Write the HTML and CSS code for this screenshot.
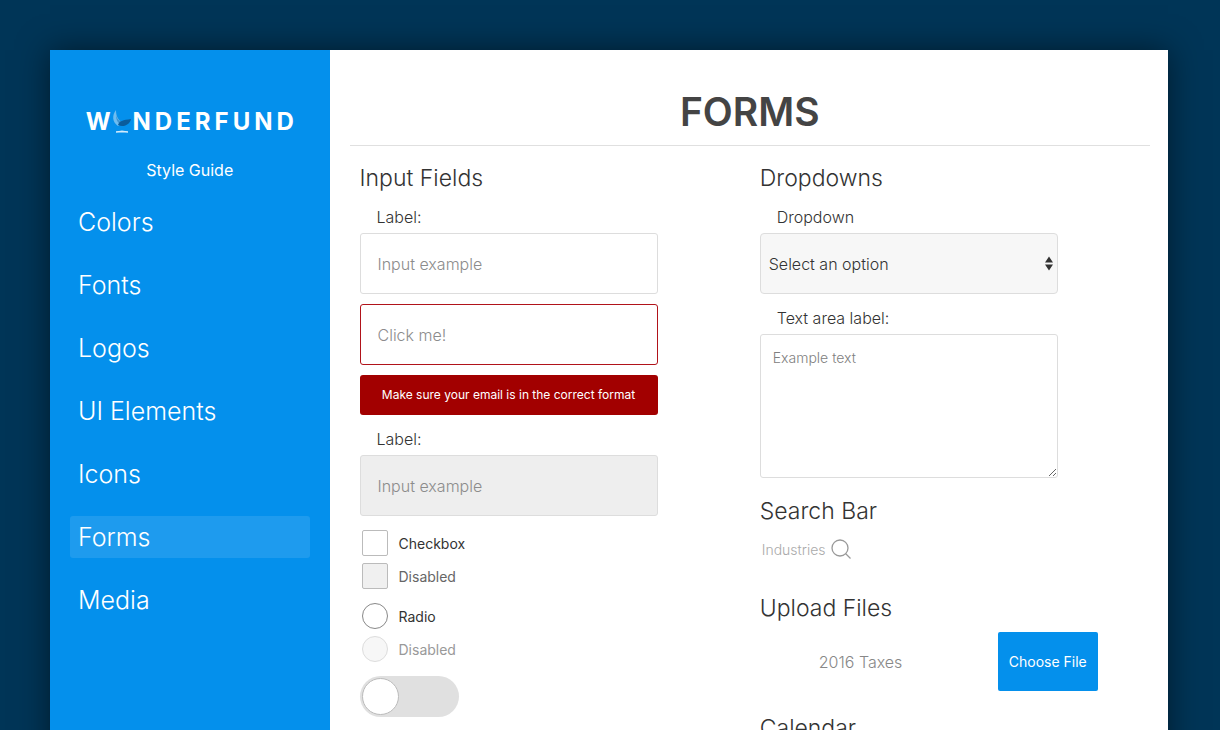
FILE: index.html
```html
<!DOCTYPE html>
<html lang="en">
<head>
<meta charset="utf-8">
<title>Wonderfund Style Guide – Forms</title>
<link rel="stylesheet" href="styles.css">
</head>
<body>
<div class="guide">
  <aside class="sidebar">
    <div class="logo">
      <span>W</span>
      <svg class="logo-mark" viewBox="0 0 20 26" aria-hidden="true">
        <path d="M4 2C0 7 0 14 6 18l5-3C6 12 4 8 4 2z" fill="#6fbdf0"/>
        <path d="M4 7c0 5 2 8 5 10l2-3C7 13 5 11 4 7z" fill="#3f93cf"/>
        <path d="M6 17c1-4 5-5 13-6-1 5-7 9-13 6z" fill="#0a5c9c"/>
        <path d="M4 24q6-2 12 0z" fill="#d5ecfc" stroke="#d5ecfc"/>
      </svg>
      <span class="logo-rest">NDERFUND</span>
    </div>
    <p class="tagline">Style Guide</p>
    <nav class="nav">
      <a href="#colors">Colors</a>
      <a href="#fonts">Fonts</a>
      <a href="#logos">Logos</a>
      <a href="#ui">UI Elements</a>
      <a href="#icons">Icons</a>
      <a href="#forms" class="active" aria-current="page">Forms</a>
      <a href="#media">Media</a>
    </nav>
  </aside>
  <main class="content">
    <h1>FORMS</h1>
    <div class="columns">
      <section class="column">
        <h2>Input Fields</h2>
        <label class="label" for="input1">Label:</label>
        <input class="field" id="input1" type="text" placeholder="Input example">
        <input class="field invalid" type="text" placeholder="Click me!" aria-label="Email" aria-describedby="error">
        <p class="error" id="error">Make sure your email is in the correct format</p>
        <label class="label" for="input2">Label:</label>
        <input class="field" id="input2" type="text" placeholder="Input example" disabled>
        <div class="choices">
          <label class="choice"><input type="checkbox">Checkbox</label>
          <label class="choice off"><input type="checkbox" disabled>Disabled</label>
        </div>
        <div class="choices">
          <label class="choice"><input type="radio" name="r">Radio</label>
          <label class="choice faded"><input type="radio" name="r" disabled>Disabled</label>
        </div>
        <input class="toggle" type="checkbox" role="switch" aria-label="Toggle">
      </section>
      <section class="column">
        <h2>Dropdowns</h2>
        <label class="label" for="dropdown">Dropdown</label>
        <div class="select">
          <select id="dropdown"><option>Select an option</option></select>
          <svg class="arrows" viewBox="0 0 8 14" aria-hidden="true"><path d="M4 0l4 6H0zM4 14L0 8h8z" fill="#333"/></svg>
        </div>
        <label class="label" for="area">Text area label:</label>
        <textarea class="area" id="area" placeholder="Example text"></textarea>
        <h2 class="next">Search Bar</h2>
        <form class="search">
          <input type="text" placeholder="Industries" aria-label="Search">
          <button type="button" aria-label="Search"><svg viewBox="0 0 20 20" fill="none" stroke="#999" stroke-width="1.3" aria-hidden="true"><circle cx="9" cy="9" r="8"/><path d="M14.500 14.500l5 5"/></svg></button>
        </form>
        <h2 class="next upload-title">Upload Files</h2>
        <div class="upload">
          <span class="file-name">2016 Taxes</span>
          <button type="button" class="choose">Choose File</button>
        </div>
        <h2 class="next">Calendar</h2>
      </section>
    </div>
  </main>
</div>
</body>
</html>
```
FILE: styles.css
```css
* { box-sizing: border-box; }

body {
  margin: 0;
  padding: 50px 52px 0 50px;
  background: #003557;
  color: #333;
  font-family: Inter, "Open Sans", sans-serif;
  font-size: 16px;
  font-weight: 300;
}

input, select, textarea, button { font: inherit; color: inherit; margin: 0; }
h1, h2, p { margin: 0; }

.guide {
  display: grid;
  grid-template-columns: 1fr 3fr;
  min-height: calc(100vh - 50px);
  background: #fff;
  box-shadow: 0 0 30px rgba(0, 0, 0, .5);
}

.sidebar {
  padding: 56px 20px 0;
  background: #0490ec;
  color: #fff;
}

.logo {
  display: flex;
  align-items: center;
  justify-content: center;
  height: 30px;
  padding-left: 4px;
  font-size: 24px;
  font-weight: 700;
}
.logo-mark { width: 20px; height: 26px; margin: 0 1px; }
.logo-rest { letter-spacing: 4px; }

.tagline {
  margin-top: 22px;
  line-height: 24px;
  font-weight: 400;
  text-align: center;
}

.nav {
  display: flex;
  flex-direction: column;
  gap: 21px;
  margin-top: 19px;
}
.nav a {
  padding: 0 8px;
  border-radius: 3px;
  color: inherit;
  font-size: 25px;
  line-height: 42px;
  text-decoration: none;
}
.nav .active { background: #1e9bee; }

.content { padding: 35px 18px 0 20px; }

h1 {
  padding-bottom: 6px;
  border-bottom: 1px solid #e0e0e0;
  color: #444;
  font-size: 39px;
  font-weight: 600;
  line-height: 54px;
  text-align: center;
}

.columns { display: grid; grid-template-columns: 1fr 1fr; }
.column { padding: 17px 10px 0; }

h2 { font-size: 23px; font-weight: 300; line-height: 30px; }
h2.next { margin-top: 18px; }

.label {
  display: block;
  margin: 12px 0 4px;
  padding-left: 17px;
  line-height: 24px;
}

.field, .select, .area {
  display: block;
  width: 100%;
  max-width: 298px;
  border: 1px solid #ddd;
  border-radius: 3px;
  background: #fff;
}
.field { height: 61px; padding: 0 17px; }
.field::placeholder { color: #8c8c8c; opacity: 1; }
.field:disabled { background: #eee; }
.invalid { margin-top: 10px; border-color: #b1131a; }

.error {
  max-width: 298px;
  margin-top: 10px;
  border-radius: 3px;
  background: #a20000;
  color: #fff;
  font-size: 12px;
  font-weight: 400;
  line-height: 40px;
  text-align: center;
}

.choices {
  display: grid;
  gap: 7px;
  margin: 14px 0 0 2px;
}
.choice {
  display: flex;
  align-items: center;
  gap: 11px;
  height: 26px;
  font-size: 14px;
  font-weight: 400;
}
.choice input {
  appearance: none;
  width: 26px;
  height: 26px;
  border: 1px solid #bbb;
  border-radius: 2px;
  background: #fff;
}
.choice input[type="radio"] { border-color: #888; border-radius: 50%; }
.choice input:disabled { background: #f0f0f0; }
.choice.off { color: #666; }
.choice.faded { color: #999; }
.choice.faded input { border-color: #ddd; background: #f7f7f7; }

.toggle {
  display: flex;
  align-items: center;
  appearance: none;
  width: 99px;
  height: 41px;
  margin-top: 14px;
  padding: 0 2px;
  border-radius: 21px;
  background: #e0e0e0;
}
.toggle::before {
  content: "";
  width: 35px;
  height: 35px;
  border: 1px solid #bbb;
  border-radius: 50%;
  background: #fff;
}

.select { position: relative; border-radius: 4px; background: #f7f7f7; }
.select select {
  appearance: none;
  display: block;
  width: 100%;
  height: 59px;
  padding: 0 8px;
  border: 0;
  background: transparent;
}
.arrows {
  position: absolute;
  top: 22px;
  right: 4px;
  width: 8px;
  height: 15px;
  pointer-events: none;
}

.area { height: 144px; padding: 14px 12px; font-size: 14px; resize: both; }
.area::placeholder { color: #808080; opacity: 1; }

.search {
  display: flex;
  align-items: center;
  height: 26px;
  margin-top: 10px;
  padding-left: 2px;
}
.search input {
  width: 69px;
  padding: 0;
  border: 0;
  background: transparent;
  font-size: 14px;
}
.search input::placeholder { color: #aaa; opacity: 1; }
.search button { padding: 0; border: 0; background: transparent; }
.search svg { display: block; width: 20px; height: 20px; }

h2.upload-title { margin-top: 31px; }

.upload {
  display: flex;
  align-items: center;
  justify-content: space-between;
  max-width: 338px;
  margin-top: 9px;
  padding-left: 59px;
}
.file-name { color: #888; }
.choose {
  width: 100px;
  height: 59px;
  padding: 0;
  border: 0;
  border-radius: 2px;
  background: #0490ec;
  color: #fff;
  font-size: 14px;
  font-weight: 400;
}
.upload + h2.next { margin: 22px 0 24px; }
```
